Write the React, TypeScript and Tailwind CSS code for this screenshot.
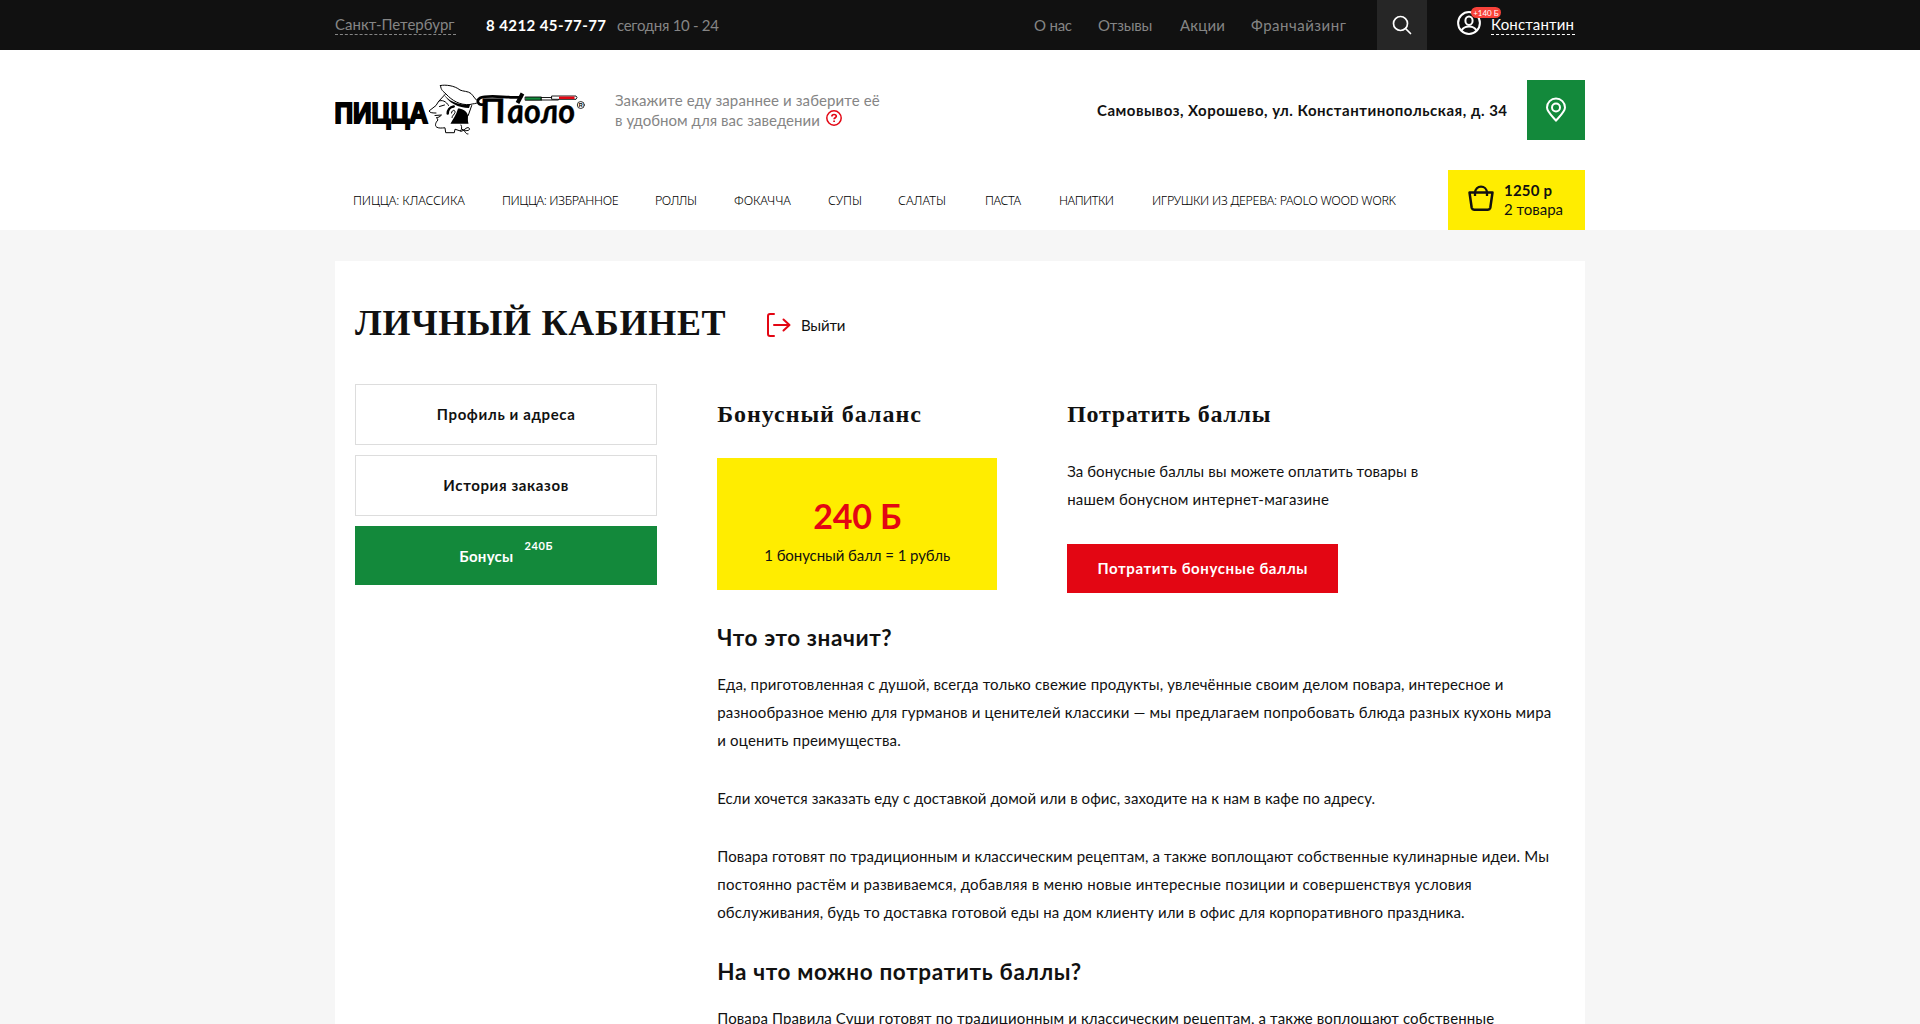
import React from "react";

const navItems = [
  { label: "ПИЦЦА: КЛАССИКА", box: "w-[149px]", track: "tracking-[-0.1px]" },
  { label: "ПИЦЦА: ИЗБРАННОЕ", box: "w-[153px]", track: "tracking-[-0.4px]" },
  { label: "РОЛЛЫ", box: "w-[79px]", track: "tracking-[-0.5px]" },
  { label: "ФОКАЧЧА", box: "w-[94px]", track: "tracking-[-0.1px]" },
  { label: "СУПЫ", box: "w-[70px]", track: "tracking-[-0.1px]" },
  { label: "САЛАТЫ", box: "w-[87px]", track: "tracking-[0.1px]" },
  { label: "ПАСТА", box: "w-[74px]", track: "tracking-[-0.4px]" },
  { label: "НАПИТКИ", box: "w-[93px]", track: "tracking-[-0.5px]" },
  { label: "ИГРУШКИ ИЗ ДЕРЕВА: PAOLO WOOD WORK", box: "w-[260px]", track: "tracking-[-0.32px]" },
];

function Logo() {
  return (
    <svg width="254" height="60" viewBox="0 0 254 60" fill="none" stroke="#000" strokeLinecap="round" strokeLinejoin="round">
      <text
        transform="translate(-.5 42.800) scale(1 1.38)"
        fontFamily="Liberation Sans"
        fontWeight="700"
        fontSize="22"
        textLength="93.5"
        lengthAdjust="spacingAndGlyphs"
        fill="#000"
        strokeWidth="1.500"
        strokeLinejoin="miter"
      >
        ПИЦЦА
      </text>
      <g strokeWidth="1">
        <path d="M110 14.500l-6.500 7-2.500 4-7 5.500c1 2 4 2 7 2m-1 2.500 6.500-.5c-2 2-3 2.500-5 2.500l1.500 2.500c-3 3-3 6-1.500 7 2 1.500 5 1 8.500.8l.7 4.900h8.600l.7-3.500 6 2" />
        <path d="M103.500 21.500c3-2.500 8 0 10 4m-9 1 5-1.500" />
        <path d="M105.500 5.500c5-1 14 0 19.500 4.500 3 1.500 8 1 11 3.500 3 3 4 6 8 8.500-3 2-6 1.500-9 2.500-10 1-18-4-24-10.500-3-3-5-3.500-5.500-8.500z" fill="#fff" />
        <path d="M108 13c4 6 10 11.500 27 12l-1 3c-10 0-21-5-26-15z" fill="#000" stroke="none" />
        <path d="M112.700 33.500c0-3 2-6.500 6-7" strokeWidth="2.500" />
        <path d="M116.500 33c0-3 4-4 3.500-.5-.5 2-3 3-3 5" />
        <path d="M123 28.500c4 0 9 2.500 10 7 0 3-.5 5 .5 8.300H115.500c2-4 6-9 7.500-15.300z" fill="#000" stroke="none" />
        <path d="M136.700 25.500l-3.500 10" />
        <path d="M126 45c1 2 1 4-.5 6 3 1 6-5 8.500-3s-3 4-7 1.500c3 0 3 5 6 4.500" />
      </g>
      <path d="M148 24.500c-5 1-7-4-3-6.500 6-3 18-1.200 33-.7h8" strokeWidth="2.700" />
      <path d="M187.500 13.500l-5 9.500" strokeWidth="4" strokeLinecap="butt" />
      <g fill="#000" stroke="#000" strokeWidth=".3" fontFamily="Lato" fontStyle="italic" fontWeight="700">
        <text transform="translate(146 43.200) skewX(7)" fontSize="34" textLength="26" lengthAdjust="spacingAndGlyphs">П</text>
        <text transform="translate(173 43.200) skewX(5)" fontSize="34" textLength="68" lengthAdjust="spacingAndGlyphs">аоло</text>
      </g>
      <path d="M190.500 17h16v3.200h-16z" fill="#13893b" strokeWidth=".9" />
      <path d="M206.500 17.500h17v2.500h-17z" fill="#fff" strokeWidth=".9" />
      <path d="M217 16h24l1 1.500-1 1.800h-24z" fill="#fff" strokeWidth=".9" />
      <path d="M224 16.500h15.500v2.500h-15.500z" fill="#e30613" stroke="none" />
      <circle cx="245.800" cy="25" r="3.500" strokeWidth=".8" />
      <text x="245.800" y="27" fontSize="5.500" fontFamily="Liberation Sans" fontWeight="700" textAnchor="middle" fill="#000" stroke="none">R</text>
    </svg>
  );
}

function SearchIcon() {
  return (
    <svg width="20" height="20" viewBox="0 0 20 20" fill="none" stroke="#fff" strokeWidth="1.700" strokeLinecap="round">
      <circle cx="8.500" cy="8.500" r="7" />
      <path d="M13.500 13.500l5 5" />
    </svg>
  );
}

function UserIcon() {
  return (
    <svg width="24" height="24" viewBox="0 0 24 24" fill="none" stroke="#fff" strokeWidth="2">
      <circle cx="12" cy="12" r="10.900" />
      <ellipse cx="12" cy="9.700" rx="3.600" ry="4.200" />
      <path d="M4.500 19.500c2-3.500 4-4 7.500-4s5.500.5 7.500 4" />
    </svg>
  );
}

function TopBar() {
  return (
    <div className="h-[50px] bg-[#111]">
      <div className="mx-auto flex h-full w-[1250px] items-center text-[15px] leading-[18px] text-[#858585]">
        <a className="mt-[-1px] h-[20px] w-[121px] whitespace-nowrap border-b border-dashed border-[#858585]">Санкт-Петербург</a>
        <b className="ml-[30px] w-[131px] whitespace-nowrap text-white tracking-[0.42px]">8 4212 45-77-77</b>
        <span className="w-[417px] whitespace-nowrap tracking-[-0.29px]">сегодня 10 - 24</span>
        <span className="w-[64px] whitespace-nowrap tracking-[-0.22px]">О нас</span>
        <span className="w-[82px] tracking-[-0.2px]">Отзывы</span>
        <span className="w-[71px] tracking-[0.2px]">Акции</span>
        <span className="w-[126px] tracking-[0.52px]">Франчайзинг</span>
        <span className="flex h-[50px] w-[50px] items-center justify-center bg-[#262626]">
          <SearchIcon />
        </span>
        <span className="relative ml-[30px] mt-[-4px] h-6 w-6">
          <UserIcon />
          <span className="absolute left-[14px] top-[-4px] flex h-[11px] w-[30px] items-center justify-center whitespace-nowrap rounded-full bg-[#f9423a] text-[8px] leading-none text-white">
            +140 Б
          </span>
        </span>
        <a className="ml-[10px] mt-[-1px] h-[20px] w-[84px] border-b border-dashed border-white text-white tracking-[0.15px]">Константин</a>
      </div>
    </div>
  );
}

function Header() {
  return (
    <header className="h-[180px] bg-white">
      <div className="mx-auto w-[1250px]">
        <div className="flex h-[120px] pt-[30px]">
          <div className="w-[280px]">
            <Logo />
          </div>
          <div className="w-[482px] whitespace-nowrap pt-[10px] text-[15px] leading-5 text-[#858585]">
            <p className="tracking-[0.11px]">Закажите еду зараннее и заберите её</p>
            <p className="flex items-center tracking-[0.05px]">
              в удобном для вас заведении
              <svg className="mb-[4px] ml-[6px]" width="16" height="16" viewBox="0 0 16 16" fill="none" stroke="#e30613" strokeWidth="1.500">
                <circle cx="8" cy="8" r="7.200" />
                <path d="M5.900 6.500c0-2.700 4.400-2.600 4.400-.2 0 1.400-2.200 1.500-2.200 3m0 1.300v1.500" strokeWidth="1.700" />
              </svg>
            </p>
          </div>
          <b className="w-[430px] whitespace-nowrap pt-[20px] text-[15px] leading-5 tracking-[0.51px]">
            Самовывоз, Хорошево, ул. Константинопольская, д. 34
          </b>
          <div className="flex h-[60px] w-[58px] items-center justify-center bg-[#13893b]">
            <svg width="22" height="26" viewBox="0 0 22 26" fill="none" stroke="#fff" strokeWidth="2">
              <path d="M11 23.500C6 18 2 14.500 2 10.500a9 9 0 0 1 18 0c0 4-4 7.500-9 13z" />
              <circle cx="11" cy="10.500" r="4" />
            </svg>
          </div>
        </div>
        <div className="flex h-[60px] items-center">
          <nav className="mt-[2px] flex w-[1113px] whitespace-nowrap pl-[18px] font-['Noto_Sans'] text-[12.5px] font-light leading-5 text-black">
            {navItems.map((item) => (
              <a key={item.label} className={`${item.box} ${item.track}`}>
                {item.label}
              </a>
            ))}
          </nav>
          <div className="flex h-[60px] w-[137px] bg-[#ffed00] pl-5">
            <svg className="mt-[14px]" width="27" height="28" viewBox="0 0 27 28" fill="none" stroke="#111" strokeWidth="2.500" strokeLinejoin="round">
              <path d="M1.500 8.500h23l-2.200 15.300a3 3 0 0 1-2.500 2H6.200a3 3 0 0 1-2.500-2z" />
              <path d="M7 12V9C7 .5 19 .5 19 9v3" strokeWidth="2.300" />
            </svg>
            <div className="ml-[9px] whitespace-nowrap pt-[11px] text-[15px] leading-[19px]">
              <b className="block tracking-[0.2px]">1250 р</b>
              <span className="block tracking-[0px]">2 товара</span>
            </div>
          </div>
        </div>
      </div>
    </header>
  );
}

function Sidebar() {
  return (
    <aside className="flex w-[303px] flex-col text-center text-[15px] font-bold leading-5 tracking-[0.62px]">
      <a className="flex h-[61px] items-center justify-center border border-[#ddd] pb-px">Профиль и адреса</a>
      <a className="mt-[10px] flex h-[61px] items-center justify-center border border-[#ddd] pb-px">История заказов</a>
      <a className="mt-[10px] flex h-[59px] items-center justify-center bg-[#13893b] text-white">
        <span className="tracking-[0.28px]">Бонусы</span>
        <span className="mb-[19px] ml-[11px] text-[11px] tracking-[0.6px]">240Б</span>
      </a>
    </aside>
  );
}

function Content() {
  return (
    <main className="ml-[60px] w-[850px] whitespace-nowrap text-[15px] leading-7">
      <div className="flex">
        <section className="w-[350px]">
          <h3 className="mt-[15px] font-['Liberation_Serif'] text-[24px] font-bold leading-[30px] tracking-[0.96px]">Бонусный баланс</h3>
          <div className="mt-[29px] flex h-[132px] w-[280px] flex-col items-center bg-[#ffed00] pt-[38px]">
            <b className="text-[34px] leading-[40px] text-[#e30613] tracking-[-0.2px]">240 Б</b>
            <span className="mt-[5px] tracking-[-0.08px]">1 бонусный балл = 1 рубль</span>
          </div>
        </section>
        <section>
          <h3 className="mt-[15px] font-['Liberation_Serif'] text-[24px] font-bold leading-[30px] tracking-[0.72px]">Потратить баллы</h3>
          <p className="mt-[28px] tracking-[0.07px]">За бонусные баллы вы можете оплатить товары в</p>
          <p className="tracking-[0.2px]">нашем бонусном интернет-магазине</p>
          <a className="mt-[31px] flex h-[49px] w-[271px] items-center justify-center bg-[#e30613] pb-px font-bold text-white tracking-[0.61px]">
            Потратить бонусные баллы
          </a>
        </section>
      </div>
      <h4 className="mt-[31px] text-[22.5px] font-bold tracking-[0.6px]">Что это значит?</h4>
      <p className="mt-[18px]">
        <span className="block tracking-[0.144px]">Еда, приготовленная с душой, всегда только свежие продукты, увлечённые своим делом повара, интересное и</span>
        <span className="block tracking-[0.187px]">разнообразное меню для гурманов и ценителей классики — мы предлагаем попробовать блюда разных кухонь мира</span>
        <span className="block tracking-[0.2px]">и оценить преимущества.</span>
      </p>
      <p className="mt-[30px] tracking-[0.068px]">Если хочется заказать еду с доставкой домой или в офис, заходите на к нам в кафе по адресу.</p>
      <p className="mt-[30px]">
        <span className="block tracking-[0.135px]">Повара готовят по традиционным и классическим рецептам, а также воплощают собственные кулинарные идеи. Мы</span>
        <span className="block tracking-[0.25px]">постоянно растём и развиваемся, добавляя в меню новые интересные позиции и совершенствуя условия</span>
        <span className="block tracking-[0.145px]">обслуживания, будь то доставка готовой еды на дом клиенту или в офис для корпоративного праздника.</span>
      </p>
      <h4 className="mt-[32px] text-[22.5px] font-bold tracking-[0.66px]">На что можно потратить баллы?</h4>
      <p className="mt-[18px] tracking-[0.121px]">Повара Правила Суши готовят по традиционным и классическим рецептам, а также воплощают собственные</p>
    </main>
  );
}

export default function App() {
  return (
    <div className="h-screen overflow-hidden bg-[#f6f6f6] font-[Lato,sans-serif] text-[#111]">
      <TopBar />
      <Header />
      <div className="mx-auto mt-[31px] h-[900px] w-[1250px] bg-white px-5">
        <div className="flex items-center pt-[40px]">
          <h1 className="w-[412px] whitespace-nowrap font-['Liberation_Serif'] text-[36px] font-bold leading-[44px] tracking-[0.7px]">ЛИЧНЫЙ КАБИНЕТ</h1>
          <a className="mt-[4px] flex items-center text-[15px] leading-5 tracking-[-0.2px]">
            <svg className="mr-[10px]" width="24" height="24" viewBox="0 0 24 24" fill="none" stroke="#e30613" strokeWidth="2" strokeLinecap="round" strokeLinejoin="round">
              <path d="M7 1H3Q1 1 1 3v18q0 2 2 2h4M7 12h15M16.500 6.500 22.500 12l-6 5.500" />
            </svg>
            Выйти
          </a>
        </div>
        <div className="mt-[39px] flex items-start">
          <Sidebar />
          <Content />
        </div>
      </div>
    </div>
  );
}
